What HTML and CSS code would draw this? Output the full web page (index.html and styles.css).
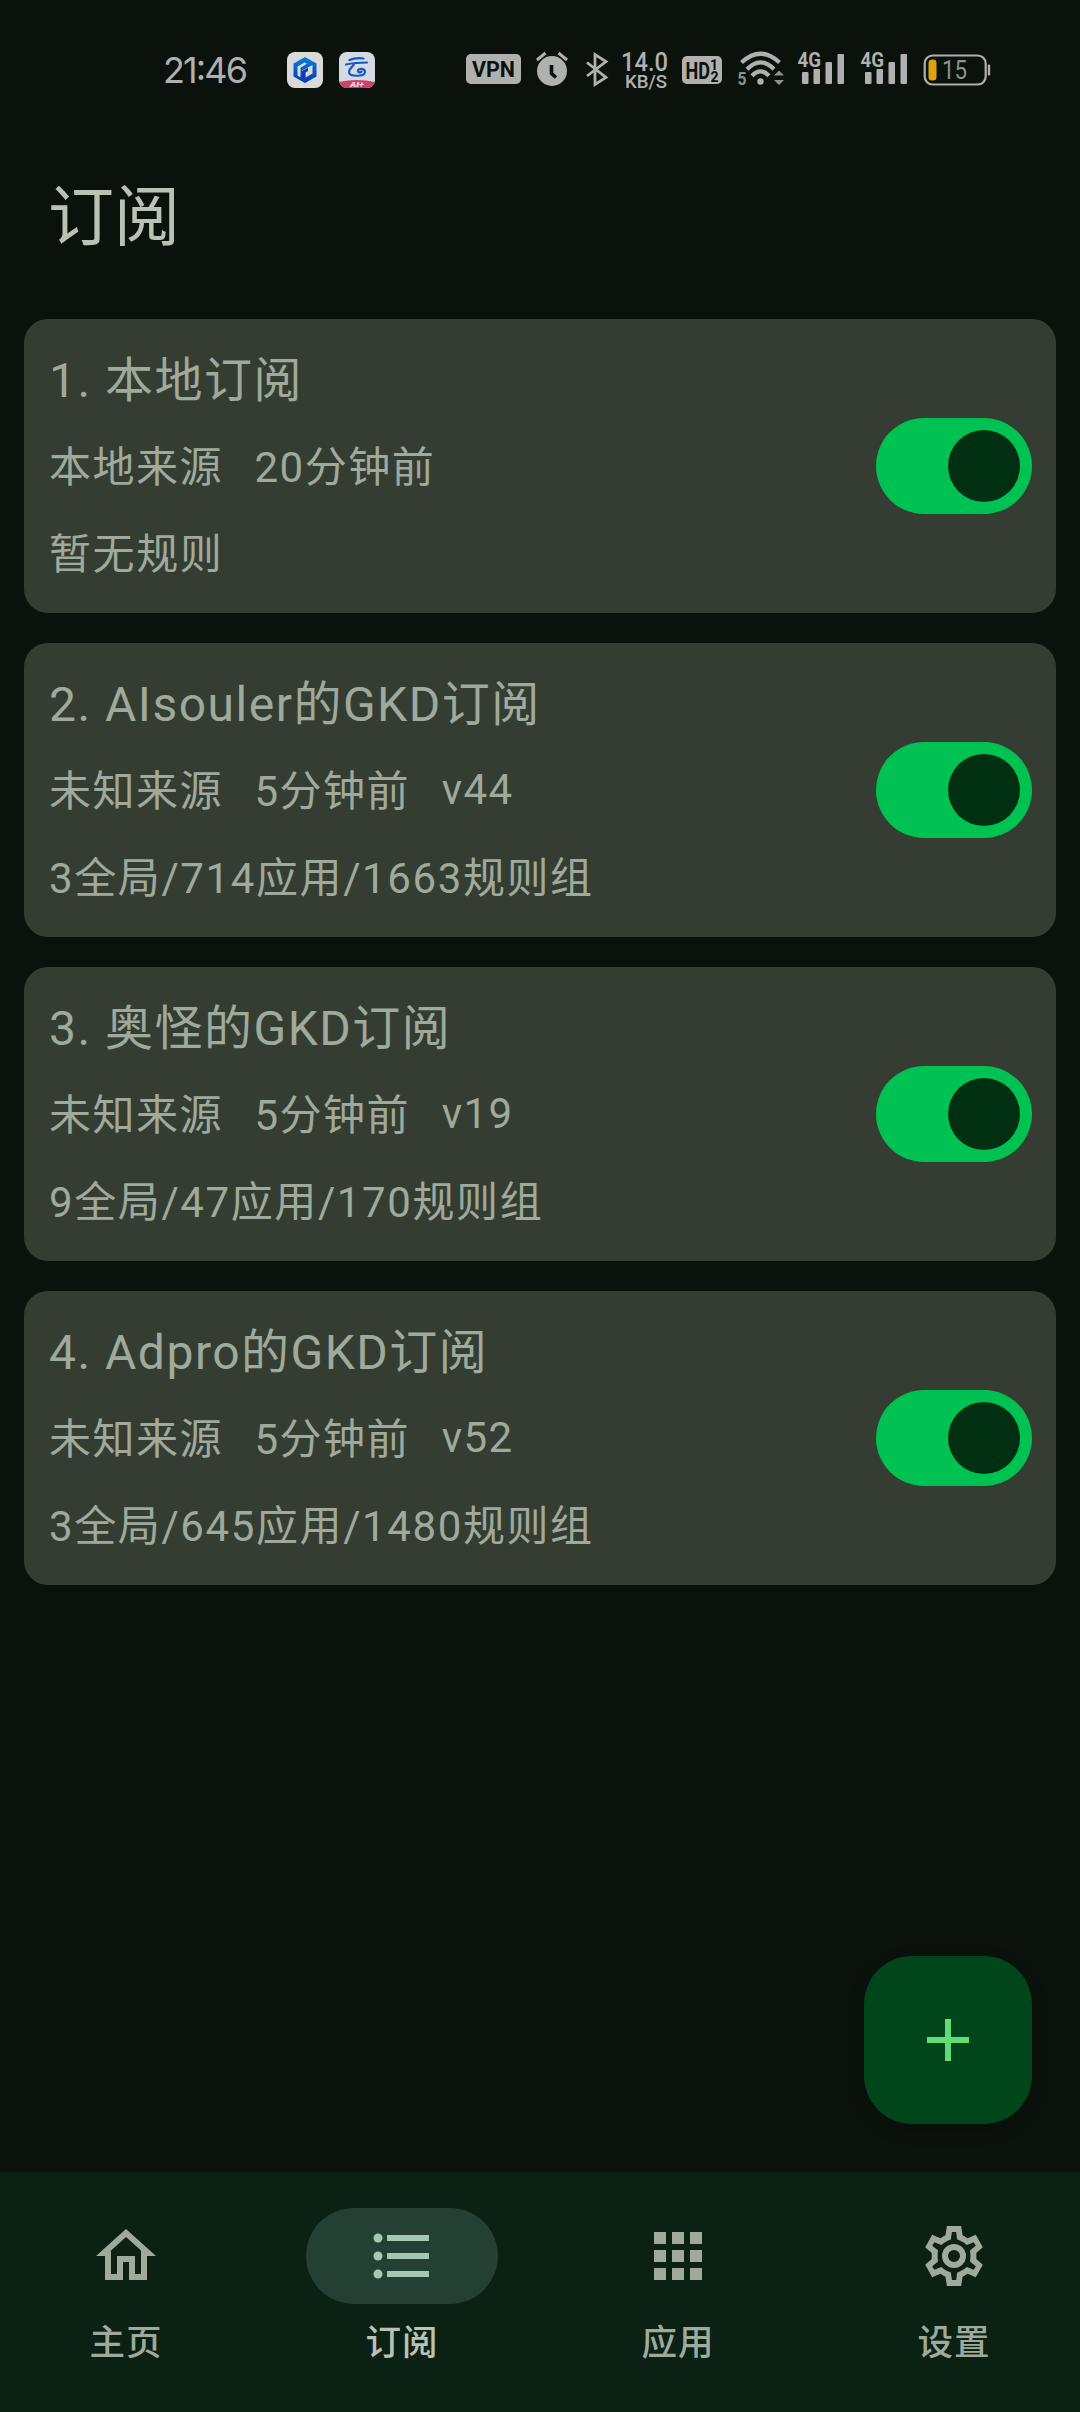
FILE: index.html
```html
<!DOCTYPE html>
<html lang="zh-CN">
<head>
<meta charset="utf-8">
<title>订阅</title>
<link rel="stylesheet" href="styles.css">
</head>
<body>
<div class="screen">
  <div class="status">
    <svg class="clock" width="92" height="40" viewBox="160 50 92 40"><text x="163" y="83" font-family="Inter" font-size="36" textLength="85">21:46</text></svg>
    <svg class="app-first" width="36" height="36" viewBox="0 0 36 36">
      <defs><linearGradient id="hex" x1="0" y1="0" x2="0" y2="1"><stop offset="0" stop-color="#0a80d6"/><stop offset="1" stop-color="#0738b0"/></linearGradient></defs>
      <rect width="36" height="36" rx="8" fill="#dadada"/>
      <path d="M18 5l11.500 6.500v13L18 31 6.500 24.500v-13z" fill="url(#hex)"/>
      <path d="M10.500 14.500l7-4 2.500 1.300-6.500 4v9.500l-3-1.800zM15 18.500l10.500-5.500v8.500l-7 4v-5.500l-3.500 6z" fill="#dadada"/>
      <path d="M15 19l6-3.300v3.300l-2.700 1.500v4.500L15 26.500z" fill="#0a3cb4"/>
    </svg>
    <svg class="app-second" width="36" height="36" viewBox="0 0 36 36">
      <defs><clipPath id="round"><rect width="36" height="36" rx="8"/></clipPath></defs>
      <g clip-path="url(#round)">
        <rect width="36" height="36" fill="#d4dae2"/>
        <path d="M0 30Q18 26 36 30v6H0z" fill="#cf3f6c"/>
        <path d="M10.500 8q6-2.500 14-1.500M7 12.500q9-2 21-2M15 12.500c-2 3-5 4-5 7.500 0 5 16 5 16 0 0-4-7-4-7-1 0 1.500 3 2 3.500.5" fill="none" stroke="#1557c4" stroke-width="2.200" stroke-linecap="round"/>
        <text x="11" y="34.600" font-size="6.500" font-weight="900" font-style="italic" fill="#e6dfe2" textLength="14" lengthAdjust="spacingAndGlyphs">AI+</text>
      </g>
    </svg>
    <svg class="vpn" width="55" height="30" viewBox="0 0 55 30"><rect width="55" height="30" rx="5"/><text class="cut" x="6" y="23" font-size="22" font-weight="700" textLength="43" lengthAdjust="spacingAndGlyphs">VPN</text></svg>
    <svg class="alarm" width="32" height="36" viewBox="536 51 32 36"><circle cx="552" cy="71" r="15"/><path d="M537 60l8.500-7M558.500 53l8.500 7" fill="none" stroke="#b0b0b0" stroke-width="3"/><path d="M551.500 65v8.500l4.500 4" fill="none" stroke="#0a120b" stroke-width="3.600"/></svg>
    <svg class="bt" width="24" height="36" viewBox="585 51 24 36"><path d="M587 62.500L606 77.500 595 84.500V54.500L606 61.500 587 76" fill="none" stroke="#b0b0b0" stroke-width="2.800"/></svg>
    <svg class="speed" width="48" height="40" viewBox="621 50 48 40"><text x="621" y="71" font-size="25" font-weight="500" textLength="47" lengthAdjust="spacingAndGlyphs">14.0</text><text x="625" y="87.500" font-size="19" font-weight="500" textLength="42" lengthAdjust="spacingAndGlyphs">KB/S</text></svg>
    <svg class="hd" width="40" height="28" viewBox="682 56 40 28"><rect x="682" y="56" width="40" height="28" rx="5"/><g class="cut" font-weight="700"><text x="685.500" y="78.500" font-size="23" textLength="24.500" lengthAdjust="spacingAndGlyphs">HD</text><text x="710" y="70" font-size="14">1</text><text x="710.500" y="81.500" font-size="14">2</text></g></svg>
    <svg class="wifi" width="50" height="40" viewBox="736 50 50 40"><circle cx="760.500" cy="81.500" r="3.200"/><path d="M741.500 62.500Q760.500 45 779.500 62.500M747 69.300Q760.500 55.500 774 69.300M752 75.700Q760.500 67 769 75.700" fill="none" stroke="#b0b0b0" stroke-width="4.200"/><path d="M774 75.500l5-5 5 5zM774 80l5 5 5-5z" fill="#8f928f"/><text x="737.500" y="85" font-size="18" font-weight="700" fill="#8f928f" textLength="9" lengthAdjust="spacingAndGlyphs">5</text></svg>
    <svg class="signal" width="48" height="36" viewBox="797 50 48 36"><text x="797.500" y="67" font-size="21" font-weight="700" textLength="23.500" lengthAdjust="spacingAndGlyphs">4G</text><rect x="802" y="72" width="6.500" height="12" rx="1"/><rect x="813.500" y="69" width="6.500" height="15" rx="1"/><rect x="825.500" y="62" width="6.500" height="22" rx="1"/><rect x="837.500" y="54" width="6.500" height="30" rx="1"/></svg>
    <svg class="signal second" width="48" height="36" viewBox="797 50 48 36"><text x="797.500" y="67" font-size="21" font-weight="700" textLength="23.500" lengthAdjust="spacingAndGlyphs">4G</text><rect x="802" y="72" width="6.500" height="12" rx="1"/><rect x="813.500" y="69" width="6.500" height="15" rx="1"/><rect x="825.500" y="62" width="6.500" height="22" rx="1"/><rect x="837.500" y="54" width="6.500" height="30" rx="1"/></svg>
    <svg class="battery" width="68" height="32" viewBox="922.500 53.500 68 32"><rect x="924.200" y="55" width="61" height="29" rx="8" fill="none" stroke="#b0b0b0" stroke-width="2.200"/><rect x="987.300" y="64" width="2.400" height="11" rx="1"/><rect x="928" y="59" width="8" height="21" rx="3.500" fill="#dba312"/><text x="941.500" y="78.500" font-size="25" fill="#8f928f" textLength="25" lengthAdjust="spacingAndGlyphs">15</text></svg>
  </div>

  <header class="topbar"><h1>订阅</h1></header>

  <main class="list">
    <section class="card">
      <div class="info"><h2>1. 本地订阅</h2><div class="meta"><span>本地来源</span><span>20分钟前</span></div><p>暂无规则</p></div>
      <div class="switch"><div class="thumb"></div></div>
    </section>
    <section class="card">
      <div class="info"><h2>2. AIsouler的GKD订阅</h2><div class="meta"><span>未知来源</span><span>5分钟前</span><span class="version">v44</span></div><p>3全局/714应用/1663规则组</p></div>
      <div class="switch"><div class="thumb"></div></div>
    </section>
    <section class="card">
      <div class="info"><h2>3. 奥怪的GKD订阅</h2><div class="meta"><span>未知来源</span><span>5分钟前</span><span class="version">v19</span></div><p>9全局/47应用/170规则组</p></div>
      <div class="switch"><div class="thumb"></div></div>
    </section>
    <section class="card">
      <div class="info"><h2>4. Adpro的GKD订阅</h2><div class="meta"><span>未知来源</span><span>5分钟前</span><span class="version">v52</span></div><p>3全局/645应用/1480规则组</p></div>
      <div class="switch"><div class="thumb"></div></div>
    </section>
  </main>

  <div class="fab"><svg width="72" height="72" viewBox="0 0 24 24"><path d="M19 13h-6v6h-2v-6H5v-2h6V5h2v6h6z"/></svg></div>

  <nav class="nav">
    <div class="tab"><div class="pill"><svg width="72" height="72" viewBox="0 0 24 24"><path d="M12 5.690l5 4.500V18h-2v-6H9v6H7v-7.810l5-4.500M12 3L2 12h3v8h6v-6h2v6h6v-8h3z"/></svg></div><span>主页</span></div>
    <div class="tab active"><div class="pill"><svg width="72" height="72" viewBox="0 0 24 24"><circle cx="4" cy="6" r="1.500"/><circle cx="4" cy="12" r="1.500"/><circle cx="4" cy="18" r="1.500"/><path d="M7 5h14v2H7zM7 11h14v2H7zM7 17h14v2H7z"/></svg></div><span>订阅</span></div>
    <div class="tab"><div class="pill"><svg width="72" height="72" viewBox="0 0 24 24"><path d="M4 4h4v4H4zM10 4h4v4h-4zM16 4h4v4h-4zM4 10h4v4H4zM10 10h4v4h-4zM16 10h4v4h-4zM4 16h4v4H4zM10 16h4v4h-4zM16 16h4v4h-4z"/></svg></div><span>应用</span></div>
    <div class="tab"><div class="pill"><svg width="72" height="72" viewBox="0 0 24 24"><path fill-rule="evenodd" d="M14.350 2h-4.700L9.130 5.070 7.440 6.050 4.740 4.950 2.400 9.050 4.570 11v2L2.400 14.950 4.740 19.050 7.440 17.950 9.130 18.930 9.650 22h4.700l.52-3.070 1.690-.98 2.700 1.100 2.340-4.100L19.430 13v-2l2.170-1.950-2.340-4.100-2.700 1.100-1.690-.98zM12.700 4l.35 2.480 1.060.43 1.230.71.91.7 1.060-.43 1.270-.51.7 1.210-1.070.85-.89.7.14 1.130v1.460l-.14 1.130.89.7 1.080.84-.7 1.210-1.270-.51-1.040-.42-.9.680-1.250.73-1.060.43-.36 2.480h-1.400l-.35-2.480-1.060-.43-1.230-.71-.91-.7-1.060.43-1.270.51-.7-1.210 1.080-.84.89-.7-.14-1.130v-1.460l.14-1.130-.89-.7-1.080-.84.7-1.210 1.270.51 1.040.42.9-.68 1.250-.73 1.060-.43L11.310 4z"/><circle cx="12" cy="12" r="3" fill="none" stroke="currentColor" stroke-width="2"/></svg></div><span>设置</span></div>
  </nav>
</div>
</body>
</html>
```
FILE: styles.css
```css
* { box-sizing: border-box; margin: 0; padding: 0; }
body { background: #0a120b; font-family: Roboto, "Noto Sans CJK SC", sans-serif; }
svg { display: block; flex: none; fill: currentColor; overflow: visible; }
h1, h2 { font-weight: 400; }

.screen {
  position: relative;
  width: 1080px;
  height: 2412px;
  display: flex;
  flex-direction: column;
  color: #9fa99c;
}

.status { height: 120px; padding: 20px 0 0 160px; display: flex; align-items: center; color: #b0b0b0; }
.status .cut { fill: #0a120b; }
.app-first { margin-left: 35px; }
.app-second { margin-left: 16px; }
.vpn { margin: -2px 0 0 91px; }
.alarm { margin: -2px 0 0 15px; }
.bt { margin: -2px 0 0 17px; }
.speed { margin-left: 12px; }
.hd { margin-left: 13px; }
.wifi { margin-left: 14px; }
.signal { margin: -4px 0 0 11px; }
.signal.second { margin-left: 15px; }
.battery { margin: -1px 0 0 14.500px; }

.topbar { height: 199px; padding: 3px 48px 7px; display: flex; align-items: center; }
.topbar h1 { font-size: 66px; line-height: 84px; color: #b9c2b4; }

.list { flex: 1; padding: 0 24px; display: flex; flex-direction: column; gap: 30px; }
.card {
  height: 294px;
  padding: 24px;
  display: flex;
  align-items: center;
  justify-content: space-between;
  border-radius: 24px;
  background: #353d33;
}
.info { padding: 4px 0 0 1px; display: flex; flex-direction: column; gap: 15px; font-size: 42px; line-height: 72px; letter-spacing: 1.5px; white-space: nowrap; }
.info h2 { font-size: 48px; height: 72px; }
.info p { height: 72px; letter-spacing: 1.600px; }
.meta { height: 72px; display: flex; gap: 31.500px; }
.meta .version { line-height: 68px; }

.switch { width: 156px; height: 96px; padding: 12px; display: flex; justify-content: flex-end; border-radius: 48px; background: #00c252; }
.thumb { width: 72px; height: 72px; border-radius: 50%; background: #003011; }

.fab {
  position: absolute;
  right: 48px;
  bottom: 288px;
  width: 168px;
  height: 168px;
  display: flex;
  align-items: center;
  justify-content: center;
  border-radius: 48px;
  background: #00461a;
  color: #5fdb78;
  box-shadow: 0 6px 18px rgba(0, 0, 0, .15);
}

.nav { height: 240px; padding: 36px 0 45px; display: flex; justify-content: center; gap: 24px; background: #0b2113; }
.tab { width: 252px; display: flex; flex-direction: column; align-items: center; gap: 15px; font-size: 35.500px; font-weight: 500; line-height: 48px; letter-spacing: 1px; }
.pill { width: 192px; height: 96px; display: flex; align-items: center; justify-content: center; border-radius: 48px; }
.active { color: #b9c2b4; }
.active .pill { background: #244034; color: #a4c9b3; }
```
